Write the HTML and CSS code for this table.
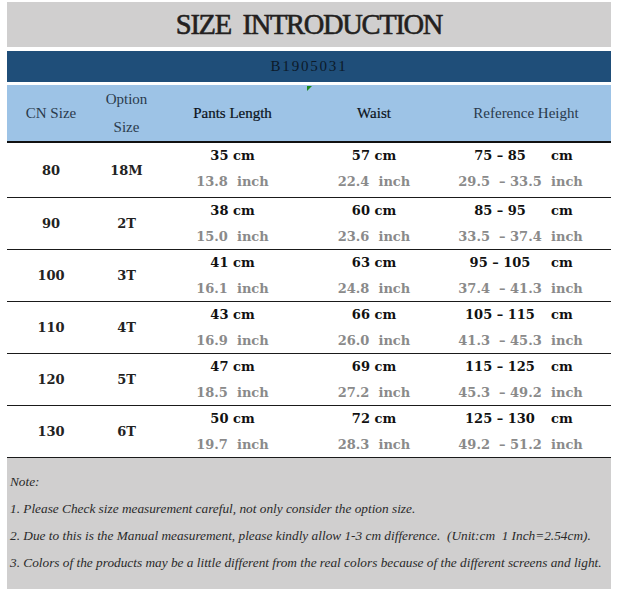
FILE: index.html
```html
<!DOCTYPE html>
<html>
<head>
<meta charset="utf-8">
<link rel="stylesheet" href="styles.css">
</head>
<body>
<div class="page">
  <div class="title">SIZE&nbsp; INTRODUCTION</div>
  <div class="code">B1905031</div>
  <div class="head">
    <div class="hc light">CN Size</div>
    <div class="hc light two"><span>Option</span><span>Size</span></div>
    <div class="hc dark">Pants Length</div>
    <div class="hc dark marked">Waist<i class="tri"></i></div>
    <div class="hc light">Reference Height</div>
  </div>
  <div class="rows">
    <div class="row first">
      <div class="c">80</div><div class="c">18M</div>
      <div class="v"><b>35 cm</b><s>13.8  inch</s></div>
      <div class="v"><b>57 cm</b><s>22.4  inch</s></div>
      <div class="r"><b><span class="rng">75 – 85</span><span class="u">cm</span></b><s><span class="rng">29.5  – 33.5</span><span class="u">inch</span></s></div>
    </div>
    <div class="row">
      <div class="c">90</div><div class="c">2T</div>
      <div class="v"><b>38 cm</b><s>15.0  inch</s></div>
      <div class="v"><b>60 cm</b><s>23.6  inch</s></div>
      <div class="r"><b><span class="rng">85 – 95</span><span class="u">cm</span></b><s><span class="rng">33.5  – 37.4</span><span class="u">inch</span></s></div>
    </div>
    <div class="row">
      <div class="c">100</div><div class="c">3T</div>
      <div class="v"><b>41 cm</b><s>16.1  inch</s></div>
      <div class="v"><b>63 cm</b><s>24.8  inch</s></div>
      <div class="r"><b><span class="rng">95 – 105</span><span class="u">cm</span></b><s><span class="rng">37.4  – 41.3</span><span class="u">inch</span></s></div>
    </div>
    <div class="row">
      <div class="c">110</div><div class="c">4T</div>
      <div class="v"><b>43 cm</b><s>16.9  inch</s></div>
      <div class="v"><b>66 cm</b><s>26.0  inch</s></div>
      <div class="r"><b><span class="rng">105 – 115</span><span class="u">cm</span></b><s><span class="rng">41.3  – 45.3</span><span class="u">inch</span></s></div>
    </div>
    <div class="row">
      <div class="c">120</div><div class="c">5T</div>
      <div class="v"><b>47 cm</b><s>18.5  inch</s></div>
      <div class="v"><b>69 cm</b><s>27.2  inch</s></div>
      <div class="r"><b><span class="rng">115 – 125</span><span class="u">cm</span></b><s><span class="rng">45.3  – 49.2</span><span class="u">inch</span></s></div>
    </div>
    <div class="row">
      <div class="c">130</div><div class="c">6T</div>
      <div class="v"><b>50 cm</b><s>19.7  inch</s></div>
      <div class="v"><b>72 cm</b><s>28.3  inch</s></div>
      <div class="r"><b><span class="rng">125 – 130</span><span class="u">cm</span></b><s><span class="rng">49.2  – 51.2</span><span class="u">inch</span></s></div>
    </div>
  </div>
  <div class="note">
    <p>Note:</p>
    <p>1. Please Check size measurement careful, not only consider the option size.</p>
    <p>2. Due to this is the Manual measurement, please kindly allow 1-3 cm difference.&nbsp; (Unit:cm&nbsp; 1 Inch=2.54cm).</p>
    <p>3. Colors of the products may be a little different from the real colors because of the different screens and light.</p>
  </div>
</div>
</body>
</html>
```
FILE: styles.css
```css
html, body {
  margin: 0;
  padding: 0;
  background: #ffffff;
}
.page {
  width: 604px;
  padding: 2px 0 0 7px;
  font-family: "Liberation Serif", "DejaVu Serif", serif;
}
.title {
  height: 45px;
  background: #d0cfcf;
  color: #231f20;
  font-size: 28.5px;
  font-weight: normal;
  -webkit-text-stroke: 0.6px #231f20;
  letter-spacing: -1.3px;
  line-height: 45px;
  text-align: center;
}
.code {
  margin-top: 4px;
  height: 31px;
  background: #1f4e79;
  color: #0c1a29;
  font-size: 15px;
  letter-spacing: 1.8px;
  line-height: 31px;
  text-align: center;
}
.head {
  margin-top: 3px;
  height: 56px;
  background: #9dc3e6;
  border-bottom: 2px solid #111;
  display: grid;
  grid-template-columns: 88px 63px 149px 134px 170px;
}
.hc {
  display: flex;
  align-items: center;
  justify-content: center;
  font-size: 15px;
  position: relative;
}
.hc.light { color: #2a3a4c; }
.hc.dark { color: #0b121a; -webkit-text-stroke: 0.2px #0b121a; }
.hc.two {
  flex-direction: column;
  line-height: 28px;
}
.tri {
  position: absolute;
  left: 0;
  top: 1px;
  width: 0;
  height: 0;
  border-top: 5px solid #1a8a1a;
  border-right: 5px solid transparent;
}
.rows {
  font-family: "DejaVu Serif", serif;
  font-weight: bold;
  font-size: 13px;
}
.row {
  display: grid;
  grid-template-columns: 88px 63px 149px 134px 170px;
  height: 51px;
  border-bottom: 1px solid #1a1a1a;
  line-height: 26px;
}
.row.first {
  height: 54px;
}
.row.first .v, .row.first .r { padding-bottom: 3px; }
.c {
  display: flex;
  align-items: center;
  justify-content: center;
  color: #222;
}
.v, .r {
  display: flex;
  flex-direction: column;
  align-items: center;
  justify-content: flex-start;
  white-space: pre;
}
.v b, .r b {
  font-weight: bold;
  color: #111;
}
.v s, .r s {
  text-decoration: none;
  color: #8a8a8a;
}
.r {
  align-items: flex-start;
  padding-left: 12px;
}
.r b, .r s {
  display: flex;
}
.rng {
  width: 94px;
  text-align: center;
}
.u {
  margin-left: 4px;
}
.note {
  height: 131px;
  background: #d0cfcf;
  padding: 10px 0 0 3px;
  box-sizing: border-box;
  font-style: italic;
  font-size: 13.3px;
  color: #2a2a2a;
  line-height: 27px;
}
.note p {
  margin: 0;
  white-space: nowrap;
}
```
